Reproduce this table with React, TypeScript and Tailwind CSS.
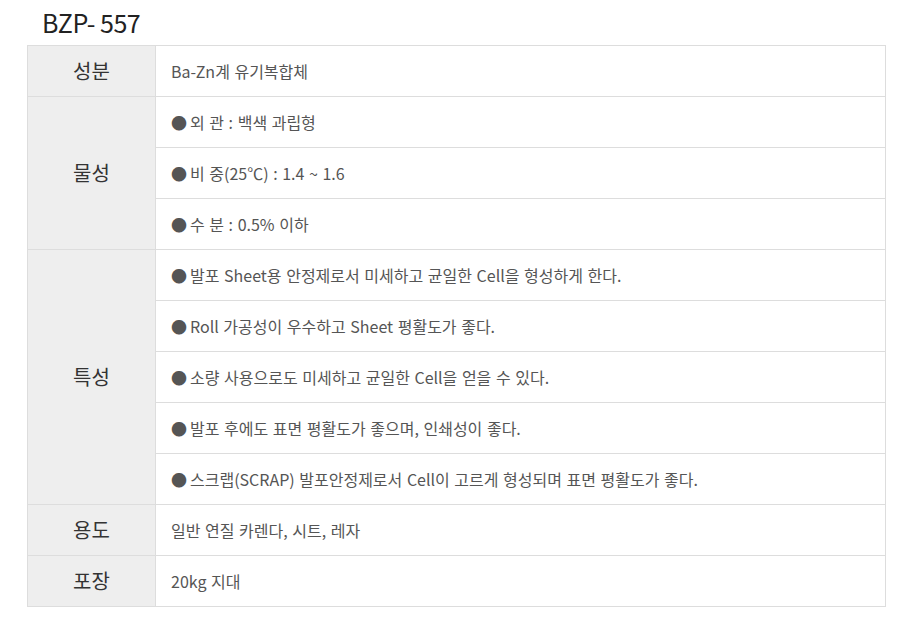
import React from 'react';

const rows: { label: string; items: string[]; bullet?: boolean }[] = [
  { label: '성분', items: ['Ba-Zn계 유기복합체'] },
  {
    label: '물성',
    bullet: true,
    items: ['외 관 : 백색 과립형', '비 중(25℃) : 1.4 ~ 1.6', '수 분 : 0.5% 이하'],
  },
  {
    label: '특성',
    bullet: true,
    items: [
      '발포 Sheet용 안정제로서 미세하고 균일한 Cell을 형성하게 한다.',
      'Roll 가공성이 우수하고 Sheet 평활도가 좋다.',
      '소량 사용으로도 미세하고 균일한 Cell을 얻을 수 있다.',
      '발포 후에도 표면 평활도가 좋으며, 인쇄성이 좋다.',
      '스크랩(SCRAP) 발포안정제로서 Cell이 고르게 형성되며 표면 평활도가 좋다.',
    ],
  },
  { label: '용도', items: ['일반 연질 카렌다, 시트, 레자'] },
  { label: '포장', items: ['20kg 지대'] },
];

const App = () => {
  return (
    <div
      className="min-h-screen bg-white pl-[27px] pr-[16px]"
      style={{ fontFamily: '"Noto Sans CJK KR", "Noto Sans", sans-serif' }}
    >
      <h1 className="pl-[15px] pt-[5px] h-[45px] text-[25px] leading-[34px] font-normal text-[#222] tracking-[-0.5px]">
        BZP- 557
      </h1>

      <table className="w-[859px] border-collapse border border-[#ddd]">
        <tbody>
          {rows.map((row) =>
            row.items.map((item, i) => (
              <tr key={row.label + i}>
                {i === 0 && (
                  <th
                    rowSpan={row.items.length}
                    className="w-[128px] bg-[#eee] border border-[#ddd] text-[20px] font-normal text-[#333] text-center align-middle"
                  >
                    {row.label}
                  </th>
                )}
                <td className="h-[51px] border border-[#ddd] pl-[15px] text-[16px] text-[#555] align-middle [word-spacing:1px]">
                  {row.bullet && <span className="text-[#555] mr-[3px]">●</span>}
                  {item}
                </td>
              </tr>
            ))
          )}
        </tbody>
      </table>
    </div>
  );
};

export default App;
